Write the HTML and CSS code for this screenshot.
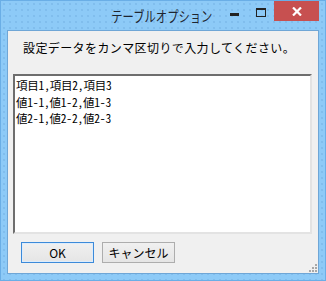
FILE: index.html
```html
<!DOCTYPE html>
<html lang="ja">
<head>
<meta charset="utf-8">
<link rel="stylesheet" href="styles.css">
</head>
<body>
<div class="window">
  <div class="titlebar">
    <span class="title"><span class="title-text">テーブルオプション</span></span>
    <div class="controls">
      <span class="ctl min"><span class="min-bar"></span></span>
      <span class="ctl max"><span class="max-box"></span></span>
      <span class="ctl close">
        <svg width="10" height="9" viewBox="0 0 10 9"><path d="M1 0.5 L9 8.5 M9 0.5 L1 8.5" stroke="#fff" stroke-width="2.2" fill="none"/></svg>
      </span>
    </div>
  </div>
  <div class="client">
    <p class="label">設定データをカンマ区切りで入力してください。</p>
    <div class="textbox">
      <div class="line">項目1,項目2,項目3</div>
      <div class="line">値1-1,値1-2,値1-3</div>
      <div class="line">値2-1,値2-2,値2-3</div>
    </div>
    <div class="buttons">
      <button class="btn default">OK</button>
      <button class="btn">キャンセル</button>
    </div>
    <div class="grip">
      <svg width="8" height="8" viewBox="0 0 8 8" fill="#a8a8a8">
        <rect x="6" y="0" width="2" height="2"/>
        <rect x="3" y="3" width="2" height="2"/><rect x="6" y="3" width="2" height="2"/>
        <rect x="0" y="6" width="2" height="2"/><rect x="3" y="6" width="2" height="2"/><rect x="6" y="6" width="2" height="2"/>
      </svg>
    </div>
  </div>
</div>
</body>
</html>
```

FILE: styles.css
```css
* { box-sizing: border-box; }
html, body { margin: 0; padding: 0; }
body {
  width: 326px;
  height: 281px;
  overflow: hidden;
  font-family: "Noto Sans CJK JP", "Liberation Sans", sans-serif;
  font-size: 12px;
  color: #000;
}
.window {
  width: 326px;
  height: 281px;
  border: 1px solid #6aaee6;
  background-color: #8dcaf7;
  background-image: radial-gradient(circle, #7ab7e8 0.6px, transparent 0.9px);
  background-size: 6px 6px;
  padding: 0 6px 6px 6px;
  display: flex;
  flex-direction: column;
}
.titlebar {
  position: relative;
  height: 29px;
  flex: none;
}
.title {
  display: block;
  text-align: center;
  padding-top: 6px;
  margin-left: -2px;
}
.title-text {
  display: inline-block;
  font-size: 14.5px;
  line-height: 17px;
  color: #1e2530;
  transform: scaleX(0.78);
  transform-origin: center;
}
.controls {
  position: absolute;
  top: 0;
  right: 0;
  height: 20px;
  display: flex;
  align-items: stretch;
}
.ctl {
  display: flex;
  align-items: center;
  justify-content: center;
}
.min { width: 26px; margin-right: 1px; }
.min-bar { display: block; width: 9px; height: 3px; background: #222; margin-top: 7px; }
.max { width: 26px; }
.max-box { display: block; width: 10px; height: 9px; border: 1px solid #222; border-top-width: 2px; margin-top: 3px; }
.close {
  width: 45px;
  background: #c75050;
  padding-top: 1px;
}
.close svg { display: block; }
.client {
  position: relative;
  flex: 1;
  background: #f0f0f0;
  border: 1px solid #6fa6d6;
  display: flex;
  flex-direction: column;
  padding: 0 6px 0 5px;
}
.label {
  margin: 9px 0 0 10px;
  line-height: 16px;
  height: 16px;
  white-space: nowrap;
  letter-spacing: 0.4px;
  color: #000;
}
.textbox {
  margin-top: 18px;
  height: 160px;
  background: #fff;
  border: 2px solid;
  border-color: #6e6e6e #e3e3e3 #e3e3e3 #6e6e6e;
  box-shadow: inset -1px -1px 0 #fff;
  padding: 1px 1px;
}
.line {
  font-size: 11.5px;
  line-height: 16.5px;
  white-space: nowrap;
  font-feature-settings: "hwid" 1;
  letter-spacing: -0.2px;
}
.buttons {
  display: flex;
  gap: 8px;
  margin-top: 8px;
  padding-left: 8px;
}
.btn {
  width: 73px;
  height: 21px;
  font-family: "Noto Sans CJK JP", "Liberation Sans", sans-serif;
  font-size: 12px;
  line-height: 17px;
  color: #000;
  background: linear-gradient(#f0f0f0, #e5e5e5);
  border: 1px solid #adadad;
  padding: 0;
  margin: 0;
}
.btn.default {
  border-color: #3c8ad9;
  box-shadow: inset 0 0 0 1px #dcecfc;
}
.grip {
  position: absolute;
  right: 1px;
  bottom: 1px;
  width: 8px;
  height: 8px;
}
.grip svg { display: block; }
```
